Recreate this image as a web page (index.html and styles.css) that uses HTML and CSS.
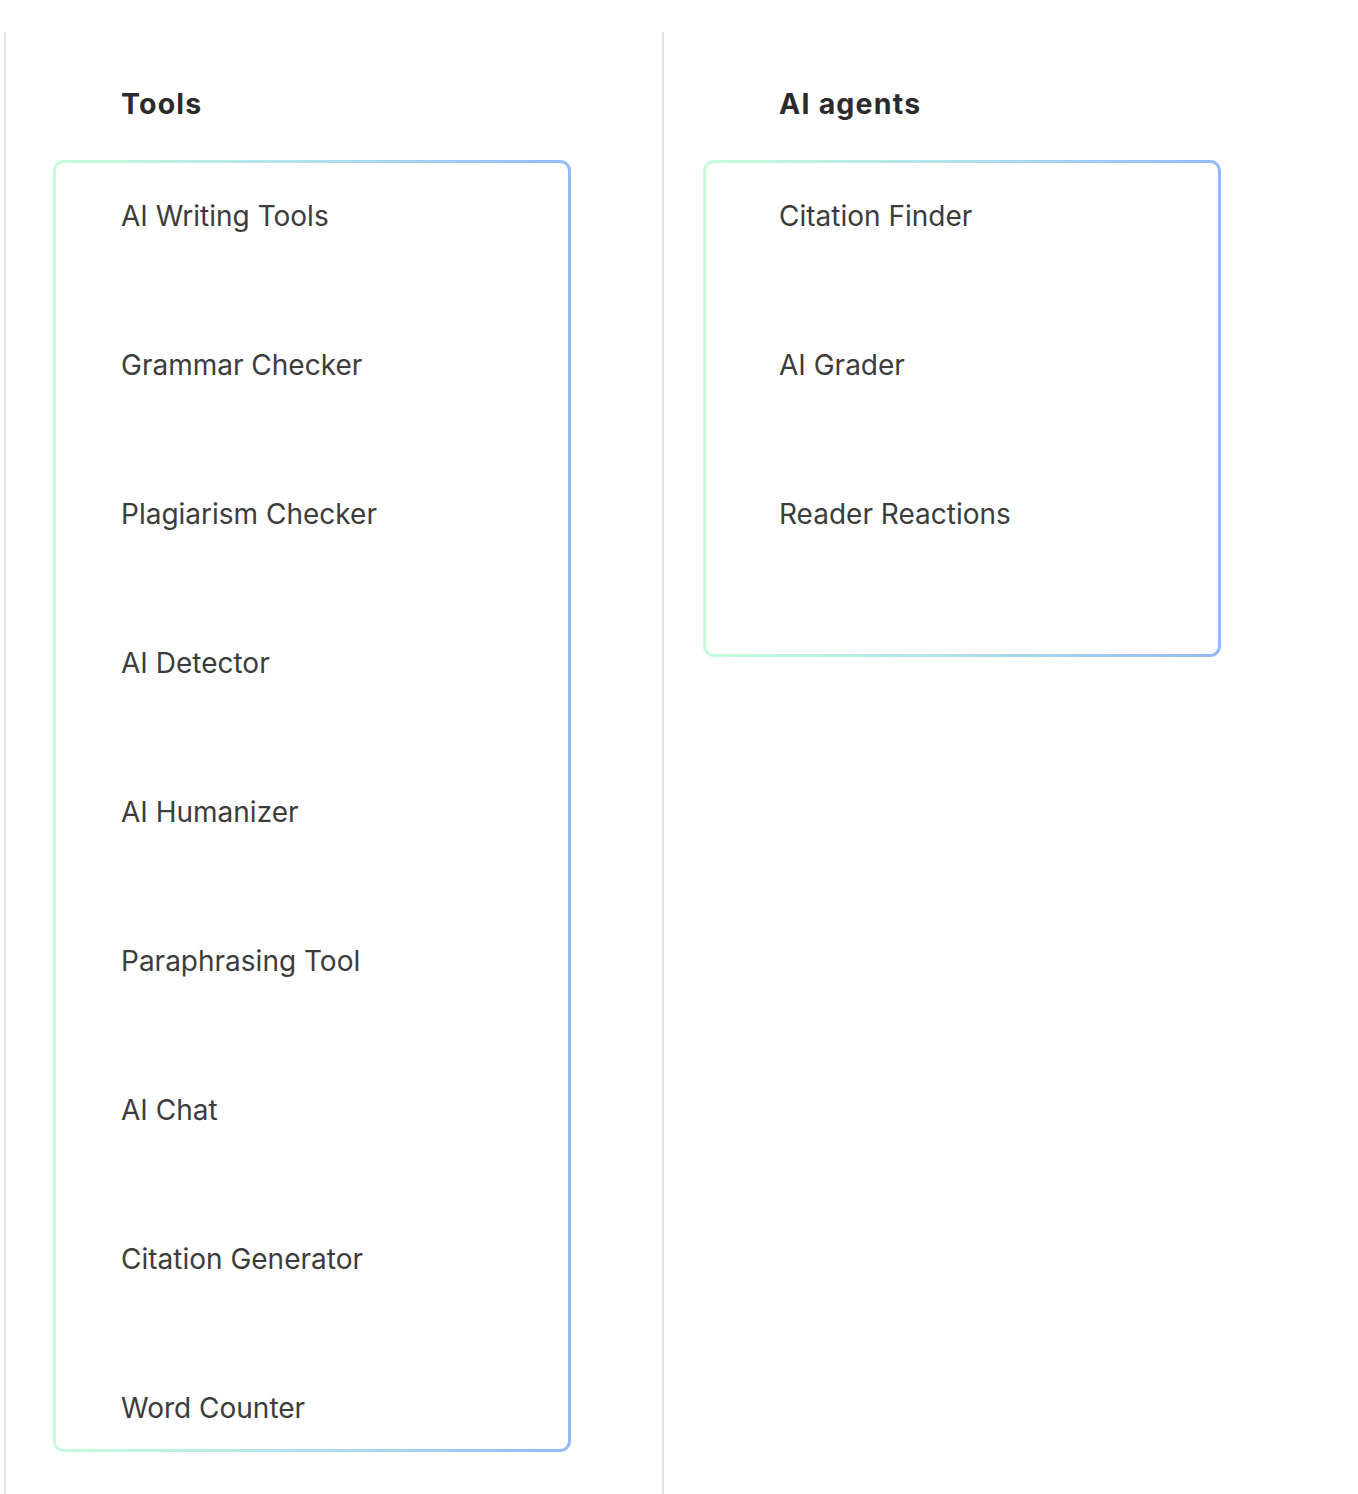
FILE: index.html
```html
<!DOCTYPE html>
<html lang="en">
<head>
<meta charset="utf-8">
<title>Tools and AI agents</title>
<link rel="stylesheet" href="styles.css">
</head>
<body>
<div class="menu">
  <section class="col col-tools">
    <h2 class="col-title">Tools</h2>
    <ul class="card">
      <li class="item">AI Writing Tools</li>
      <li class="item">Grammar Checker</li>
      <li class="item">Plagiarism Checker</li>
      <li class="item">AI Detector</li>
      <li class="item">AI Humanizer</li>
      <li class="item">Paraphrasing Tool</li>
      <li class="item">AI Chat</li>
      <li class="item">Citation Generator</li>
      <li class="item">Word Counter</li>
    </ul>
  </section>
  <section class="col col-agents">
    <h2 class="col-title">AI agents</h2>
    <ul class="card card-short">
      <li class="item">Citation Finder</li>
      <li class="item">AI Grader</li>
      <li class="item">Reader Reactions</li>
    </ul>
  </section>
</div>
</body>
</html>
```

FILE: styles.css
```css
* { box-sizing: border-box; }

html, body {
  margin: 0;
  padding: 0;
  background: #ffffff;
}

body {
  font-family: Inter, Roboto, "Liberation Sans", sans-serif;
  color: #3a3a3a;
}

.menu {
  display: flex;
  padding-top: 32px;
  padding-left: 4px;
  min-height: 1494px;
}

.col {
  border-left: 2px solid #e4e4e4;
  padding-top: 52px;
}

.col-tools {
  width: 658px;
  padding-left: 47px;
}

.col-agents {
  flex: 1;
  padding-left: 39px;
}

.col-title {
  margin: 0 0 36px 0;
  font-size: 28.5px;
  line-height: 40px;
  font-weight: 700;
  letter-spacing: 1.2px;
  color: #2b2b2b;
}

.col-tools .col-title { padding-left: 68px; }
.col-agents .col-title { padding-left: 76px; }

.card {
  list-style: none;
  margin: 0;
  width: 518px;
  padding: 33px 0 21px 0;
  border: 3px solid transparent;
  border-radius: 11px;
  background:
    linear-gradient(#ffffff, #ffffff) padding-box,
    linear-gradient(90deg, #c6fcd9 0%, #b3e3ea 45%, #93b8fa 100%) border-box;
  display: flex;
  flex-direction: column;
  gap: 109px;
}

.card-short {
  min-height: 497px;
}

.item {
  font-size: 28px;
  line-height: 40px;
  font-weight: 400;
  color: #3c3c3c;
  white-space: nowrap;
}

.col-tools .item { padding-left: 65px; }
.col-agents .item { padding-left: 73px; }
```
